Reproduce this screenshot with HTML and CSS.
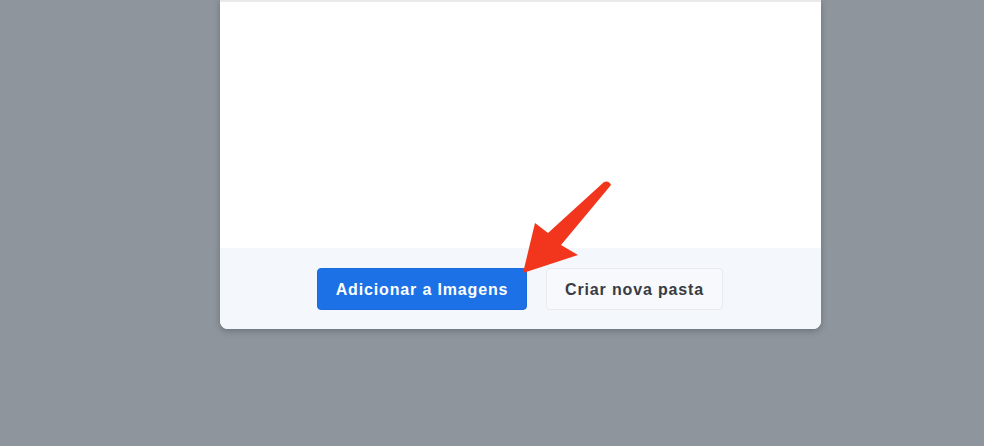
FILE: index.html
```html
<!DOCTYPE html>
<html lang="pt">
<head>
<meta charset="utf-8">
<title>Adicionar a Imagens</title>
<link rel="stylesheet" href="styles.css">
</head>
<body>
<div class="stage">
  <div class="dialog">
    <div class="dialog-body"></div>
    <div class="dialog-footer">
      <button class="btn btn-primary">Adicionar a Imagens</button>
      <button class="btn btn-secondary">Criar nova pasta</button>
    </div>
  </div>
  <svg class="pointer" width="984" height="446" viewBox="0 0 984 446" aria-hidden="true">
    <path d="M523 273 L535 223 L548 233 L604 182 Q609 180 611 185 L561 245 L578 255 Z" fill="#f2361d"/>
  </svg>
</div>
</body>
</html>
```

FILE: styles.css
```css
html, body {
  margin: 0;
  padding: 0;
}

body {
  background: #8e959c;
  font-family: "Liberation Sans", Arial, sans-serif;
}

.stage {
  position: relative;
  width: 984px;
  height: 446px;
  overflow: hidden;
}

.dialog {
  margin-left: 220px;
  width: 601px;
  height: 329px;
  display: flex;
  flex-direction: column;
  background: #ffffff;
  border-radius: 0 0 8px 8px;
  box-shadow: 0 2px 6px rgba(40, 45, 55, 0.35);
  overflow: hidden;
}

.dialog-body {
  flex: 0 0 248px;
  border-top: 2px solid #e9eaec;
  box-sizing: border-box;
}

.dialog-footer {
  flex: 1;
  background: #f4f7fb;
  display: flex;
  justify-content: center;
  align-items: flex-start;
  gap: 19px;
  padding-top: 20px;
  padding-right: 1px;
}

.btn {
  height: 42px;
  border-radius: 4px;
  font-family: "Liberation Sans", Arial, sans-serif;
  font-size: 16px;
  font-weight: bold;
  letter-spacing: 0.85px;
  padding: 2px 0 0;
  cursor: pointer;
}

.btn-primary {
  width: 210px;
  background: #1c71e6;
  color: #ffffff;
  border: 1px solid #1a6bdc;
}

.btn-secondary {
  width: 177px;
  background: #f7f9fc;
  color: #393c43;
  border: 1px solid #e7ebf0;
}

.pointer {
  position: absolute;
  left: 0;
  top: 0;
  pointer-events: none;
}
```
